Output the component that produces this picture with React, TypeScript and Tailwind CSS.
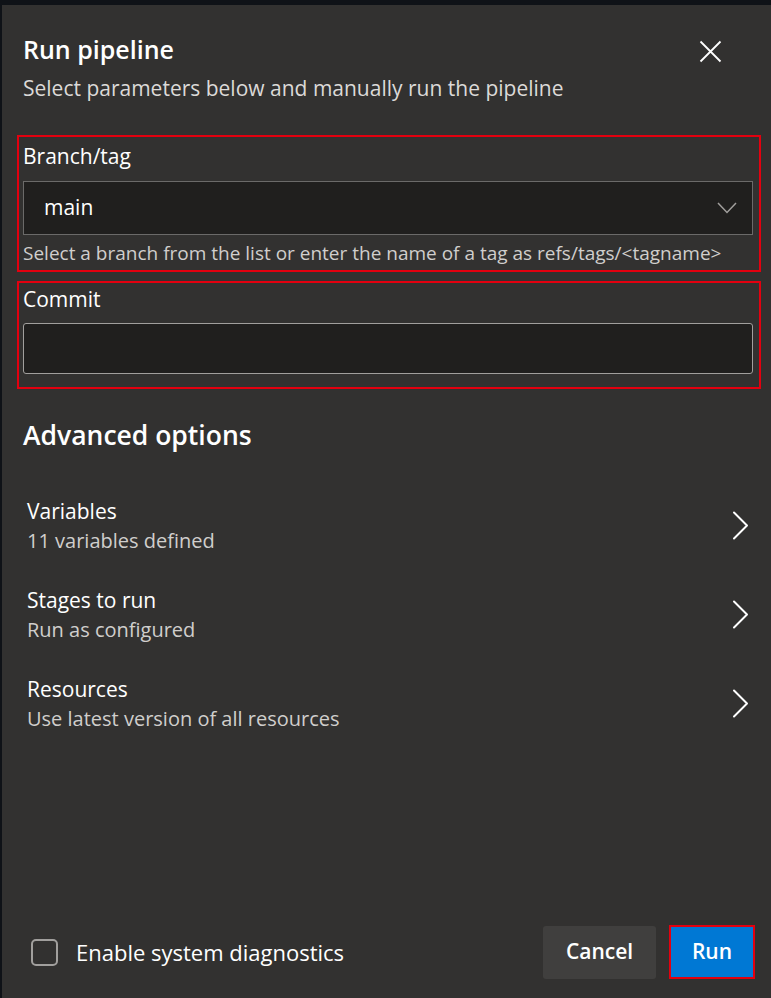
import { useState } from 'react';

function Chevron() {
  return (
    <svg width="17" height="29" viewBox="0 0 17 29" fill="none" className="text-white">
      <path d="M2 1.5 L15 14.5 L2 27.5" stroke="currentColor" strokeWidth="2" strokeLinecap="round" strokeLinejoin="round" />
    </svg>
  );
}

function OptionRow({ title, subtitle }: { title: string; subtitle: string }) {
  return (
    <button type="button" className="flex w-full items-center justify-between pl-[25px] pr-[22px] h-[89px] text-left">
      <div className="flex flex-col">
        <span className="text-[21px] leading-[29px] text-white">{title}</span>
        <span className="text-[20px] leading-[29px] text-[#d0cecc]">{subtitle}</span>
      </div>
      <Chevron />
    </button>
  );
}

export default function App() {
  const [branch] = useState('main');
  const [commit, setCommit] = useState('');
  const [diagnostics, setDiagnostics] = useState(false);

  return (
    <div
      className="min-h-[998px] w-[771px] bg-[#0f1217] pt-[5px] pl-[2px]"
      style={{ fontFamily: '"Open Sans", "Noto Sans", sans-serif' }}
    >
      <div className="flex min-h-[993px] flex-col bg-[#323130]">
        {/* Header */}
        <div className="flex items-start justify-between pl-[21px] pr-[49px] pt-[26px]">
          <div>
            <h1 className="text-[25px] font-semibold leading-[36px] text-white">Run pipeline</h1>
            <p className="mt-[6px] text-[21px] leading-[30px] text-[#dcdad8]">
              Select parameters below and manually run the pipeline
            </p>
          </div>
          <button type="button" className="mt-[9px] text-white">
            <svg width="23" height="23" viewBox="0 0 23 23" fill="none">
              <path d="M1.5 1.5 L21.5 21.5 M21.5 1.5 L1.5 21.5" stroke="currentColor" strokeWidth="1.8" />
            </svg>
          </button>
        </div>

        {/* Branch/tag */}
        <div className="ml-[15px] mr-[10px] mt-[32px] border-2 border-[#e3000f] pl-[4px] pr-[6px] pb-[3px] pt-[2px]">
          <label className="block text-[21px] leading-[34px] text-white">Branch/tag</label>
          <div className="mt-[8px] flex h-[54px] items-center justify-between border border-[#6b6a69] bg-[#201f1e] pl-[20px] pr-[15px]">
            <span className="text-[21px] text-white">{branch}</span>
            <svg width="20" height="12" viewBox="0 0 20 12" fill="none" className="text-[#a19f9d]">
              <path d="M1 1 L10 10.5 L19 1" stroke="currentColor" strokeWidth="1.5" />
            </svg>
          </div>
          <p className="mt-[4px] text-[19px] leading-[28px] text-[#d0cecc]">
            Select a branch from the list or enter the name of a tag as refs/tags/&lt;tagname&gt;
          </p>
        </div>

        {/* Commit */}
        <div className="ml-[15px] mr-[10px] mt-[9px] border-2 border-[#e3000f] pl-[4px] pr-[6px] pb-[13px] pt-[1px]">
          <label className="block text-[21px] leading-[30px] text-white">Commit</label>
          <input
            value={commit}
            onChange={(e) => setCommit(e.target.value)}
            className="mt-[9px] block h-[51px] w-full rounded-[3px] border border-[#a19f9d] bg-[#201f1e] px-[12px] text-[20px] text-white outline-none"
          />
        </div>

        {/* Advanced options */}
        <h2 className="mt-[28px] pl-[21px] text-[26.5px] font-semibold leading-[36px] text-white">Advanced options</h2>
        <div className="mt-[28px] flex flex-col">
          <OptionRow title="Variables" subtitle="11 variables defined" />
          <OptionRow title="Stages to run" subtitle="Run as configured" />
          <OptionRow title="Resources" subtitle="Use latest version of all resources" />
        </div>

        {/* Footer */}
        <div className="mt-auto flex items-center justify-between pb-[19px] pl-[29px] pr-[16px]">
          <label className="flex cursor-pointer items-center gap-[18px]">
            <button
              type="button"
              onClick={() => setDiagnostics(!diagnostics)}
              className="h-[27px] w-[27px] rounded-[5px] border-2 border-[#a19f9d]"
            />
            <span className="text-[22px] text-white">Enable system diagnostics</span>
          </label>
          <div className="flex items-center gap-[13px]">
            <button
              type="button"
              className="h-[53px] w-[113px] rounded-[3px] bg-[#403f3e] text-[21px] font-semibold text-white"
            >
              Cancel
            </button>
            <button
              type="button"
              className="h-[54px] w-[86px] border-2 border-[#e3000f] bg-[#0078d4] text-[21px] font-semibold text-white"
            >
              Run
            </button>
          </div>
        </div>
      </div>
    </div>
  );
}
